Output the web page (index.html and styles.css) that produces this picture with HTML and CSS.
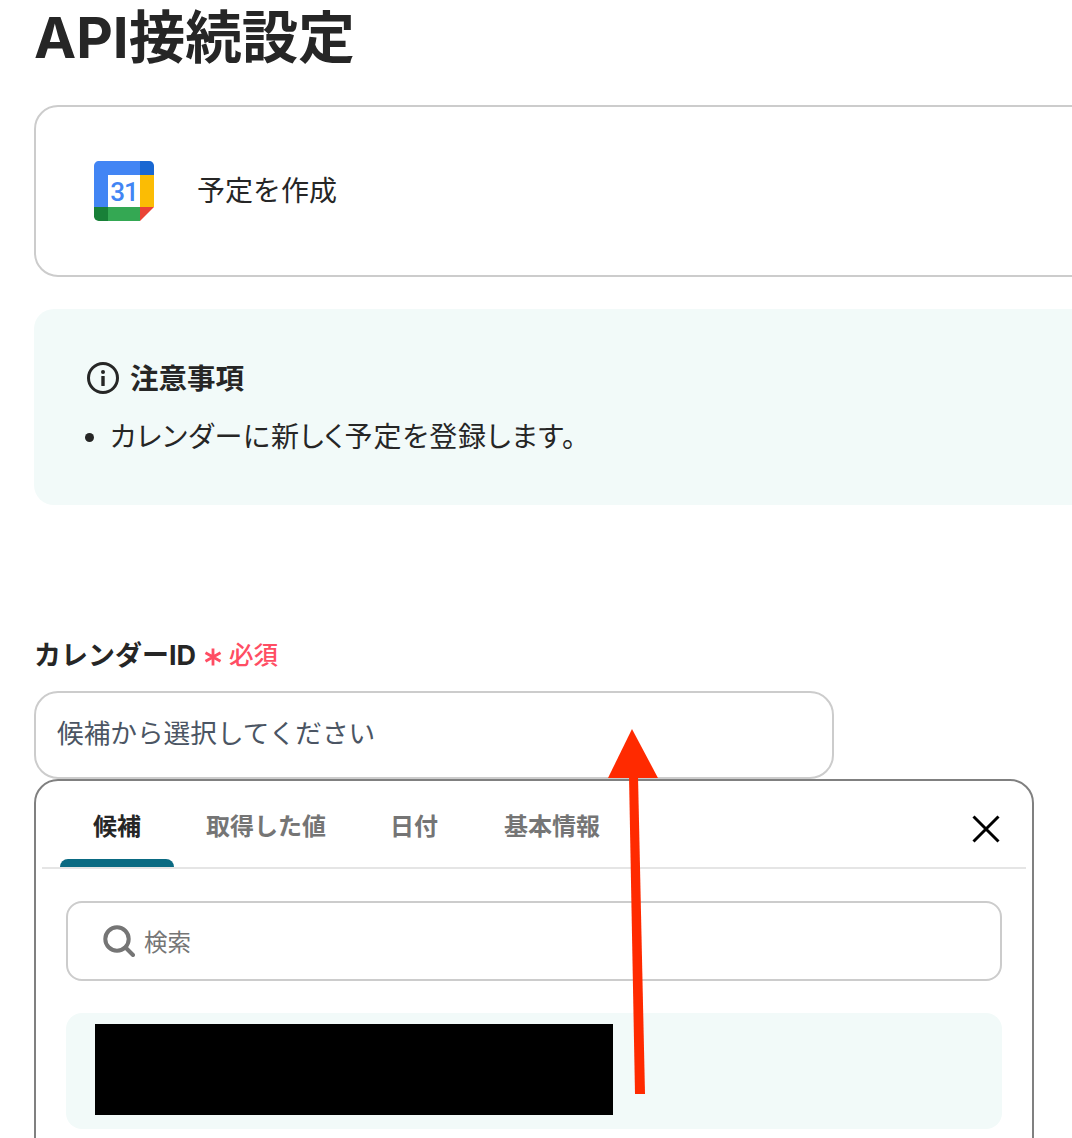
FILE: index.html
```html
<!DOCTYPE html>
<html lang="ja">
<head>
<meta charset="utf-8">
<title>API接続設定</title>
<link rel="stylesheet" href="styles.css">
</head>
<body>
<main class="page">
  <h1 class="title">API接続設定</h1>
  <section class="action-card">
    <svg class="gcal" viewBox="0 0 60 60" aria-hidden="true">
      <path fill="#fff" d="M46 14H14v32h32z"/>
      <path fill="#EA4335" d="M46 60l14-14H46z"/>
      <path fill="#FBBC04" d="M60 14H46v32h14z"/>
      <path fill="#34A853" d="M46 46H14v14h32z"/>
      <path fill="#188038" d="M0 46v9.300a4.700 4.700 0 0 0 4.700 4.700H14V46z"/>
      <path fill="#1967D2" d="M60 14V4.700A4.700 4.700 0 0 0 55.300 0H46v14z"/>
      <path fill="#4285F4" d="M46 0H4.700A4.700 4.700 0 0 0 0 4.700V46h14V14h32z"/>
      <text class="gcal-num" x="30" y="40" text-anchor="middle">31</text>
    </svg>
    <span class="action-name">予定を作成</span>
  </section>
  <section class="notice">
    <div class="notice-head">
      <svg class="info" viewBox="0 0 32 32" aria-hidden="true">
        <circle cx="16" cy="16" r="14.500" fill="none" stroke="#262626" stroke-width="3"/>
        <circle cx="16" cy="10" r="2" fill="#262626"/>
        <rect x="14.300" y="14" width="3.400" height="10" rx="0.600" fill="#262626"/>
      </svg>
      <span class="notice-title">注意事項</span>
    </div>
    <ul class="notice-list">
      <li>カレンダーに新しく予定を登録します。</li>
    </ul>
  </section>
  <section class="field">
    <div class="field-label">
      <span class="label-text">カレンダーID</span>
      <svg class="asterisk" viewBox="0 0 18 18" aria-hidden="true">
        <path d="M9 0.500v17M1.500 4.700l15 8.600M16.500 4.700l-15 8.600" stroke="#ff4d63" stroke-width="2.800" fill="none"/>
      </svg>
      <span class="required">必須</span>
    </div>
    <div class="select-input"><span class="placeholder">候補から選択してください</span></div>
    <div class="popover">
      <div class="tabs">
        <span class="tab tab-active">候補</span>
        <span class="tab tab-second">取得した値</span>
        <span class="tab tab-third">日付</span>
        <span class="tab tab-fourth">基本情報</span>
        <svg class="close" viewBox="0 0 28 28" aria-hidden="true">
          <path d="M1.500 1.500l25 25M26.500 1.500l-25 25" stroke="#000" stroke-width="3" fill="none"/>
        </svg>
      </div>
      <div class="popover-body">
        <div class="search">
          <svg class="search-icon" viewBox="0 0 32 32" aria-hidden="true">
            <circle cx="14" cy="14" r="11.700" fill="none" stroke="#757575" stroke-width="4"/>
            <path d="M23 23l7 7" stroke="#757575" stroke-width="4" stroke-linecap="round"/>
          </svg>
          <span>検索</span>
        </div>
        <div class="option"><div class="redacted"></div></div>
      </div>
    </div>
  </section>
</main>
<svg class="arrow" viewBox="0 0 1072 1138" aria-hidden="true">
  <path d="M629 776l6 318h10L638 776z" fill="#ff2a00"/>
  <path d="M632 729L658 778H608z" fill="#ff2a00"/>
</svg>
</body>
</html>
```

FILE: styles.css
```css
html, body {
  margin: 0;
  padding: 0;
  height: 1138px;
  overflow: hidden;
  background: #fff;
}
body {
  position: relative;
  font-family: Inter, "Noto Sans CJK JP", "Noto Sans", sans-serif;
  color: #262626;
}
.page {
  width: 1072px;
  height: 1138px;
  overflow: hidden;
  padding-left: 34px;
  box-sizing: border-box;
}
.title {
  margin: 0;
  height: 105px;
  font-size: 56.500px;
  line-height: 76px;
  font-weight: 700;
}
.action-card {
  box-sizing: border-box;
  width: 1200px;
  height: 172px;
  border: 2px solid #cccccc;
  border-radius: 24px;
  display: flex;
  align-items: center;
  padding-left: 58px;
  gap: 43px;
}
.gcal { width: 60px; height: 60px; flex: none; }
.gcal-num {
  font-family: Roboto, sans-serif;
  font-size: 26px;
  font-weight: 500;
  letter-spacing: -1px;
  fill: #4285f4;
}
.action-name { font-size: 28px; line-height: 40px; }
.notice {
  box-sizing: border-box;
  width: 1200px;
  height: 196px;
  margin-top: 32px;
  background: #f2faf9;
  border-radius: 20px;
  padding: 49px 0 0 53px;
}
.notice-head {
  display: flex;
  align-items: center;
  gap: 11px;
  height: 40px;
  font-size: 28.500px;
  font-weight: 700;
}
.notice-title { margin-bottom: 4px; }
.info { width: 32px; height: 32px; flex: none; }
.notice-list {
  list-style: none;
  margin: 19px 0 0;
  padding: 0;
  font-size: 28px;
  font-feature-settings: "palt";
  letter-spacing: 0.9px;
  line-height: 40px;
}
.notice-list li {
  display: flex;
  align-items: center;
  gap: 16px;
}
.notice-list li::before {
  content: "";
  width: 9px;
  height: 9px;
  margin-left: -2px;
  border-radius: 50%;
  background: #262626;
}
.field { margin-top: 129px; }
.field-label {
  display: flex;
  align-items: center;
  height: 40px;
}
.label-text { font-size: 27px; font-weight: 700; margin-bottom: 2px; }
.asterisk { width: 18px; height: 18px; margin: 6px 7px 0 8px; }
.required { font-size: 24.500px; color: #ff4d63; font-weight: 500; margin-bottom: 2px; }
.select-input {
  box-sizing: border-box;
  width: 800px;
  height: 88px;
  margin-top: 17px;
  border: 2px solid #cccccc;
  border-radius: 24px;
  padding-left: 21px;
  display: flex;
  align-items: center;
  font-size: 26.670px;
  color: #4b5563;
}
.placeholder { margin-bottom: 8px; }
.popover {
  box-sizing: border-box;
  width: 1000px;
  height: 500px;
  border: 2px solid #808080;
  border-radius: 24px;
  padding: 0 6px;
}
.tabs {
  display: flex;
  align-items: flex-start;
  height: 86px;
  border-bottom: 2px solid #e5e5e5;
}
.tab {
  font-size: 24px;
  font-weight: 700;
  line-height: 34px;
  margin-top: 29px;
  color: #757575;
}
.tab-active {
  color: #262626;
  width: 114px;
  height: 57px;
  margin-left: 18px;
  text-align: center;
  position: relative;
}
.tab-active::after {
  content: "";
  position: absolute;
  left: 0;
  right: 0;
  bottom: 0;
  height: 8px;
  background: #0a6a82;
  border-radius: 8px 8px 0 0;
}
.tab-second { margin-left: 32px; }
.tab-third { margin-left: 64px; }
.tab-fourth { margin-left: 66px; }
.close {
  width: 28px;
  height: 28px;
  margin: 34px 26px 0 auto;
}
.popover-body { padding: 32px 24px 0; }
.search {
  box-sizing: border-box;
  width: 936px;
  height: 80px;
  border: 2px solid #cccccc;
  border-radius: 16px;
  display: flex;
  align-items: center;
  padding-left: 35px;
  gap: 9px;
  font-size: 23.500px;
  color: #757575;
}
.search-icon { width: 32px; height: 32px; flex: none; }
.option {
  box-sizing: border-box;
  width: 936px;
  height: 116px;
  margin-top: 32px;
  background: #f2faf9;
  border-radius: 16px;
  padding: 11px 0 0 29px;
}
.redacted { width: 518px; height: 91px; background: #000; }
.arrow {
  position: absolute;
  left: 0;
  top: 0;
  width: 1072px;
  height: 1138px;
  pointer-events: none;
}
```
